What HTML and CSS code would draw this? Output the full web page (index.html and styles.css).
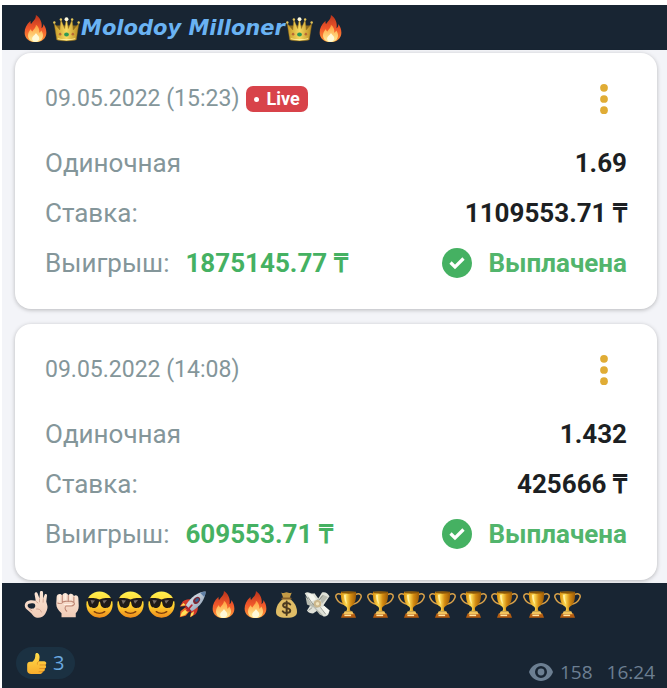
FILE: index.html
```html
<!DOCTYPE html>
<html lang="ru">
<head>
    <meta charset="UTF-8">
    <meta name="viewport" content="width=device-width, initial-scale=1.0">
    <title>Molodoy Milloner</title>
    <link rel="stylesheet" href="styles.css">
</head>
<body>
    <!-- Emoji and icon shapes -->
    <svg class="sprite" aria-hidden="true">
        <defs>
            <linearGradient id="flame-fill" x1="0" y1="0" x2="0" y2="1">
                <stop offset="0" stop-color="#b8331c"/>
                <stop offset="0.5" stop-color="#f0562a"/>
                <stop offset="1" stop-color="#ff9a3a"/>
            </linearGradient>
            <linearGradient id="flame-core" x1="0" y1="0" x2="0" y2="1">
                <stop offset="0" stop-color="#ff9c3a"/>
                <stop offset="1" stop-color="#ffee9a"/>
            </linearGradient>
            <linearGradient id="gold" x1="0" y1="0" x2="1" y2="0">
                <stop offset="0" stop-color="#d98f0c"/>
                <stop offset="0.35" stop-color="#ffdc55"/>
                <stop offset="0.65" stop-color="#d38a10"/>
                <stop offset="1" stop-color="#9a5a08"/>
            </linearGradient>
            <linearGradient id="crown-fill" x1="0" y1="0" x2="1" y2="0">
                <stop offset="0" stop-color="#c79a28"/>
                <stop offset="0.5" stop-color="#f6d960"/>
                <stop offset="1" stop-color="#b98a20"/>
            </linearGradient>
            <linearGradient id="face" x1="0" y1="0" x2="0" y2="1">
                <stop offset="0" stop-color="#fff04f"/>
                <stop offset="0.55" stop-color="#ffd02e"/>
                <stop offset="1" stop-color="#ee8b1c"/>
            </linearGradient>
            <linearGradient id="skin" x1="0" y1="0" x2="0" y2="1">
                <stop offset="0" stop-color="#fbe6d6"/>
                <stop offset="1" stop-color="#f0cbb6"/>
            </linearGradient>
            <linearGradient id="thumb-fill" x1="0" y1="0" x2="0" y2="1">
                <stop offset="0" stop-color="#ffdc4a"/>
                <stop offset="1" stop-color="#f8ad2c"/>
            </linearGradient>
            <linearGradient id="rocket-body" x1="0" y1="0" x2="1" y2="1">
                <stop offset="0" stop-color="#f4f6f8"/>
                <stop offset="1" stop-color="#7d93ab"/>
            </linearGradient>
        </defs>

        <symbol id="fire" viewBox="0 0 36 36">
            <path fill="url(#flame-fill)" d="M18.500 0C19 5 15 8 12 12c-.8-1.800-.8-3-.5-4.500C6 12 3.500 18 3.500 23.500 3.500 31 9.500 36 18 36s14.500-5 14.500-12.500c0-4-1.500-8.500-4-11.500.2 2.500-.8 4.500-2.500 5.500C27.500 10 24 3.500 18.500 0z"/>
            <path fill="url(#flame-core)" d="M18.500 13c.5 4-3.500 6-4.500 9-1.500-.8-2-2-2-3.500C9.500 21 8 24 8 27c0 5.500 4 9 10 9s10-3.500 10-9c0-2.500-1-5-2.500-6.500-.5 1.500-1.500 2.500-2.500 3C23.500 19 22 15.500 18.500 13z"/>
            <path fill="#fff9d8" d="M18.500 24c-.5 2.500-5 4-5 7.500 0 2.500 2 4 4.500 4s5-1.500 5-4.500-2.500-4-4.500-7z"/>
        </symbol>

        <symbol id="crown" viewBox="0 0 36 36">
            <path fill="#8a6a20" d="M4 14h28l-3 13H7z"/>
            <path fill="url(#crown-fill)" stroke="#94701c" stroke-width="0.600" d="M5 33 1.500 11l7.500 9L10.500 6l5 12L18 4l2.500 14 5-12L27 20l7.500-9L31 33c-4 2-22 2-26 0z"/>
            <path fill="none" stroke="#ffec96" stroke-width="1.400" d="M6.500 31.500c5 1.800 18 1.800 23 0"/>
            <circle cx="1.800" cy="10" r="1.600" fill="#e5c65a"/>
            <circle cx="10.500" cy="6" r="1.600" fill="#e5c65a"/>
            <circle cx="18" cy="5.500" r="2.600" fill="#fffbe0"/>
            <circle cx="25.500" cy="6" r="1.600" fill="#e5c65a"/>
            <circle cx="34.200" cy="10" r="1.600" fill="#e5c65a"/>
            <ellipse cx="18" cy="26" rx="3.200" ry="2.700" fill="#2f9a55"/>
            <circle cx="9.500" cy="25.500" r="1.700" fill="#b86a35"/>
            <circle cx="26.500" cy="25.500" r="1.700" fill="#b86a35"/>
        </symbol>

        <symbol id="ok-hand" viewBox="0 0 36 36">
            <path fill="url(#skin)" fill-rule="evenodd" d="M17 13 15.500 4.500c-.5-3 3-4 4-1.300L22 10 22.500 2c.2-3 4-3 4.200 0l.3 8 1.500-4.500c.8-2.500 3.800-2 3.500.8L31 14l1.500 5.500c.7 3-.5 7-3 11C27.500 34 23 36.300 18.500 35.500 15.500 35 13 32.500 11 29.500L4.500 24C2 21.500 1.500 17.500 4 15c3-3 8.500-3.300 13-2zM8 17c-2.500.8-2.300 4 0 5.500 2.500 1.500 6 1.500 7.500-.5s1-4.500-1-5.200C12.500 16 10 16.300 8 17z"/>
            <path fill="none" stroke="#c79683" stroke-width="1" stroke-linecap="round" d="M22 10.500v4M27 10.500l-.2 4.500M17 13.500l3 2.500M18 24c3-.5 6 1 6.500 4M8 23.500l4 3"/>
        </symbol>

        <symbol id="fist" viewBox="0 0 36 36">
            <path fill="url(#skin)" d="M3.500 8c0-4.500 6-5.500 7.500-2 1-4.500 7-4.500 8 0 1.500-3.500 7-3 7.500 1 2-2.500 6-1 6 2.500L33 20c0 5-2 7.500-4 9.500V35H10v-5.500C5.500 26 3 22 3 17z"/>
            <path fill="none" stroke="#bd8573" stroke-width="1.400" stroke-linecap="round" d="M11 6v9M19 6v8M26.500 8v7M5 16c3 1.500 6 .5 7-1.500 4-1 11-1.500 14 .5 3 2 0 5-3 5h-7c-2 2-1.500 5 1 7"/>
            <path fill="none" stroke="#fff1e6" stroke-width="1.600" stroke-linecap="round" d="M7 6v6M15 5v6M22.500 6v5M14 18h9"/>
        </symbol>

        <symbol id="cool" viewBox="0 0 36 36">
            <circle cx="18" cy="18" r="17.500" fill="url(#face)"/>
            <path fill="#1f1a18" d="M1 10c5-1 11-.8 15 .8 1.500.5 2.500.5 4 0C24 9.200 30 9 35 10v3c-1.200.5-1.500 1-1.800 3-.7 5-3 6.500-7 6.500-4.500 0-6.500-2-7.200-7-.3-2-1.700-2-2 0-.7 5-2.700 7-7.200 7-4 0-6.300-1.500-7-6.500C2.500 14 2.200 13.500 1 13z"/>
            <path fill="#746b66" d="m6 12 6 .5-4 5zM22 12.500l6-.5-4 5z"/>
            <path fill="none" stroke="#7c3c0c" stroke-width="1.800" stroke-linecap="round" d="M11 27.500c4 3 10 3 14 0"/>
        </symbol>

        <symbol id="rocket" viewBox="0 0 36 36">
            <path fill="#d23a2a" d="M15 11c-4-.5-8 1-10 3l-4 7 8-1zM25 21c.5 4-1 8-3 10l-7 4 1-8z"/>
            <path fill="#f06a26" d="M8 22 2 27l-1 8 8-2 5-6z"/>
            <path fill="#ffe056" d="M8 25 3.500 29 2 34l6-2 4-4zM16 30l4-3-1 5-4 3zM2 20l4-4 3 3z"/>
            <path fill="url(#rocket-body)" d="M35.500.5C26 1 16 7 9 19l8 8C29 20 35 10 35.500.5z"/>
            <path fill="#5f7fa6" d="M35.500.5c-2.500.1-5 .7-7.500 1.800l5.700 5.700c1.100-2.500 1.700-5 1.800-7.500z"/>
            <path fill="#b4262f" d="m9 19 8 8-3 1-6-6z"/>
            <ellipse cx="23.500" cy="12.500" rx="5.200" ry="3.800" transform="rotate(-45 23.500 12.500)" fill="#7b2733"/>
            <ellipse cx="24" cy="12" rx="3" ry="2" transform="rotate(-45 24 12)" fill="#2f5f92"/>
            <path stroke="#b82732" stroke-width="2.500" stroke-linecap="round" d="m17 19-6 7"/>
        </symbol>

        <symbol id="money-bag" viewBox="0 0 36 36">
            <path fill="#c39a45" d="M11 2c3 1.500 4 0 7-.5 3 .5 4 2 7 .5l-3 8h-8z"/>
            <path fill="#e0bd66" d="M14 10h8c6 4 10 11 10 17.500 0 5.500-4 8-14 8s-14-2.500-14-8C4 21 8 14 14 10z"/>
            <path stroke="#87602a" stroke-width="2.400" stroke-linecap="round" d="M12.500 10h11"/>
            <path fill="none" stroke="#4b3a20" stroke-width="2.600" stroke-linecap="round" d="M23 18c-2-3-9.500-2.500-9.500 1.300 0 4.200 9.500 2.200 9.500 6.700 0 4-8 4.500-10 1M18.200 14v18"/>
        </symbol>

        <symbol id="flying-money" viewBox="0 0 36 36">
            <path fill="#dfe1d8" d="M1 3c5-4 8 2 13 0l5 7 5-8c5-1 7 1 10 5l-8 12 8 7c-1 6-3 8-8 8l-8-8-6 4c-4 0-6-1-8-4l5-8z"/>
            <path fill="#b8bbb0" d="m2 7 9 11 8-8 3 10-6 3 10 10c-3 0-5-1-7-4l-6-7-9-4zM25 5l7 3-8 9-3-7z"/>
            <path fill="#f5f6ef" d="m4 3 8 2 4 6-6 3zM27 20l7 6-4 6-8-9z"/>
            <circle cx="18" cy="17" r="5" fill="#cbb78c"/>
            <circle cx="18" cy="17" r="2.300" fill="#f1e4bd"/>
            <path fill="none" stroke="#75796f" stroke-width="0.900" d="m5 8 8 11M25 6l-5 6M22 22l7 9M11 22l-5 4"/>
        </symbol>

        <symbol id="trophy" viewBox="0 0 36 36">
            <path fill="none" stroke="#d8a14a" stroke-width="2" d="M9 5C3 2 0 5 1.500 9c1.500 4 6 8 12 9M27 5c6-3 9 0 7.500 4-1.500 4-6 8-12 9"/>
            <path fill="url(#gold)" d="M8 1h20c.5 10-1 17-7 20-1.500 1.500-1.500 4 0 6h-6c1.500-2 1.500-4.500 0-6C9 18 7.500 11 8 1z"/>
            <ellipse cx="18" cy="2" rx="10" ry="1.600" fill="#8b5708"/>
            <path fill="#fff0a0" d="M12 5h2.500c0 5 .5 9 2 13C13 15 12 10 12 5z"/>
            <path fill="#b45c10" d="M10 30h16l2 5.500H8z"/>
            <path fill="#f3c45c" d="M13 27h10l2 4H11z"/>
            <path fill="#ffe6a3" d="M12.500 31.500h9v2h-9z"/>
        </symbol>

        <symbol id="thumb" viewBox="0 0 36 36">
            <path fill="url(#thumb-fill)" d="M2 20c0-3 2-5 5-5h4c4-3 5-7 5-12 0-4 5-3.500 6.500 0 1.500 4 .5 8-.5 11h9c4 0 5 5 2 6.500 2.500 2 1.500 5.500-1 6 1 3-.5 5-3 5.200C28 35 26 36 22 36H9c-4 0-7-2-7-6z"/>
            <path fill="none" stroke="#db8420" stroke-width="1.300" stroke-linecap="round" d="M24 20.500h9M23.500 26.500H32M22.500 32H29M22 14c-2 1-3 3-2.500 5"/>
        </symbol>

        <symbol id="check" viewBox="0 0 30 30">
            <circle cx="15" cy="15" r="15" fill="#45b162"/>
            <path fill="none" stroke="#fff" stroke-width="3.200" d="m8.500 14.500 4.500 4.500 8.500-8.500"/>
        </symbol>

        <symbol id="dots" viewBox="0 0 8 31">
            <circle cx="4" cy="4" r="4"/>
            <circle cx="4" cy="15.500" r="4"/>
            <circle cx="4" cy="27" r="4"/>
        </symbol>

        <symbol id="eye" viewBox="0 0 24 18">
            <path fill-rule="evenodd" d="M12 0C6.500 0 2 3.500 0 9c2 5.500 6.500 9 12 9s10-3.500 12-9C22 3.500 17.500 0 12 0zm0 3a6 6 0 1 1 0 12 6 6 0 0 1 0-12z"/>
            <circle cx="12" cy="9" r="3.400"/>
        </symbol>
    </svg>

    <main class="message">
        <header class="message-header">
            <svg class="emoji"><use href="#fire"/></svg>
            <svg class="emoji"><use href="#crown"/></svg>
            <h1>Molodoy Milloner</h1>
            <svg class="emoji"><use href="#crown"/></svg>
            <svg class="emoji"><use href="#fire"/></svg>
        </header>

        <section class="bets">
            <article class="card">
                <div class="card-top">
                    <time datetime="2022-05-09T15:23">09.05.2022 (15:23)</time>
                    <span class="live">Live</span>
                    <button class="menu-button" type="button" aria-label="Меню"><svg><use href="#dots"/></svg></button>
                </div>
                <div class="row">
                    <span>Одиночная</span>
                    <span class="value">1.69</span>
                </div>
                <div class="row">
                    <span>Ставка:</span>
                    <span class="value">1109553.71 ₸</span>
                </div>
                <div class="row">
                    <span>Выигрыш:</span>
                    <span class="win">1875145.77 ₸</span>
                    <span class="status"><svg><use href="#check"/></svg>Выплачена</span>
                </div>
            </article>

            <article class="card">
                <div class="card-top">
                    <time datetime="2022-05-09T14:08">09.05.2022 (14:08)</time>
                    <button class="menu-button" type="button" aria-label="Меню"><svg><use href="#dots"/></svg></button>
                </div>
                <div class="row">
                    <span>Одиночная</span>
                    <span class="value">1.432</span>
                </div>
                <div class="row">
                    <span>Ставка:</span>
                    <span class="value">425666 ₸</span>
                </div>
                <div class="row">
                    <span>Выигрыш:</span>
                    <span class="win">609553.71 ₸</span>
                    <span class="status"><svg><use href="#check"/></svg>Выплачена</span>
                </div>
            </article>
        </section>

        <footer class="message-footer">
            <div class="emoji-line">
                <svg class="emoji"><use href="#ok-hand"/></svg>
                <svg class="emoji"><use href="#fist"/></svg>
                <svg class="emoji"><use href="#cool"/></svg>
                <svg class="emoji"><use href="#cool"/></svg>
                <svg class="emoji"><use href="#cool"/></svg>
                <svg class="emoji"><use href="#rocket"/></svg>
                <svg class="emoji"><use href="#fire"/></svg>
                <svg class="emoji"><use href="#fire"/></svg>
                <svg class="emoji"><use href="#money-bag"/></svg>
                <svg class="emoji"><use href="#flying-money"/></svg>
                <svg class="emoji"><use href="#trophy"/></svg>
                <svg class="emoji"><use href="#trophy"/></svg>
                <svg class="emoji"><use href="#trophy"/></svg>
                <svg class="emoji"><use href="#trophy"/></svg>
                <svg class="emoji"><use href="#trophy"/></svg>
                <svg class="emoji"><use href="#trophy"/></svg>
                <svg class="emoji"><use href="#trophy"/></svg>
                <svg class="emoji"><use href="#trophy"/></svg>
            </div>
            <div class="message-info">
                <button class="reaction" type="button"><svg><use href="#thumb"/></svg>3</button>
                <div class="meta">
                    <svg><use href="#eye"/></svg>
                    <span>158</span>
                    <time datetime="16:24">16:24</time>
                </div>
            </div>
        </footer>
    </main>
</body>
</html>
```
FILE: styles.css
```css
* {
    box-sizing: border-box;
}

body {
    margin: 0;
    padding: 5px 0 0 2px;
    background-color: #fff;
    font-family: Roboto, sans-serif;
}

svg {
    display: block;
    flex-shrink: 0;
}

button {
    border: none;
    font: inherit;
    cursor: pointer;
}

.sprite {
    position: absolute;
    width: 0;
    height: 0;
}

.emoji {
    width: 27px;
    height: 27px;
}

/* Channel name */
.message-header {
    display: flex;
    align-items: center;
    gap: 4px;
    padding: 10px 20px 8px;
    background-color: #182533;
}

h1 {
    margin: 0 -3px;
    font-family: "DejaVu Sans", sans-serif;
    font-size: 21px;
    line-height: 27px;
    font-weight: bold;
    font-style: italic;
    color: #6ab3f3;
}

/* Bet cards */
.bets {
    display: flex;
    flex-direction: column;
    gap: 15px;
    padding: 3px 10px 3px 13px;
    background-color: #f3f4f8;
}

.card {
    display: flex;
    flex-direction: column;
    gap: 20px;
    padding: 31px 30px;
    border-radius: 16px;
    background-color: #fff;
    box-shadow: 0 1px 4px rgba(0, 0, 0, 0.25);
    font-size: 26px;
    line-height: 30px;
    color: #84969a;
}

.card-top {
    display: flex;
    align-items: center;
    margin-bottom: 14px;
    font-size: 23px;
}

.live {
    display: flex;
    align-items: center;
    gap: 7px;
    margin-left: 7px;
    padding: 0 8px;
    border-radius: 7px;
    background-color: #d8434a;
    font-size: 18px;
    line-height: 26px;
    font-weight: bold;
    color: #fff;
}

.live::before {
    content: "";
    width: 5px;
    height: 5px;
    border-radius: 50%;
    background-color: #fff;
}

.menu-button {
    margin-left: auto;
    padding: 0 19px;
    background: none;
}

.menu-button svg {
    width: 8px;
    height: 30px;
    fill: #e0ac35;
}

.row {
    display: flex;
    align-items: center;
}

.value {
    margin-left: auto;
    font-weight: bold;
    color: #1c1f23;
}

.win {
    margin-left: 16px;
    font-weight: bold;
    color: #45b162;
}

.status {
    display: flex;
    align-items: center;
    gap: 16px;
    margin-left: auto;
    font-weight: bold;
    color: #52b56c;
}

.status svg {
    width: 30px;
    height: 30px;
}

/* Text under the photo */
.message-footer {
    padding: 8px 12px 3px 14px;
    background-color: #182533;
    font-family: "Open Sans", sans-serif;
}

.emoji-line {
    display: grid;
    grid-template-columns: repeat(18, 1fr);
    justify-items: center;
    max-width: 562px;
    margin: 0 5px 29px;
}

.message-info {
    display: flex;
    justify-content: space-between;
    align-items: flex-start;
}

.reaction {
    display: flex;
    align-items: center;
    gap: 6px;
    padding: 0 11px 0 10px;
    border-radius: 16px;
    background-color: #1b3142;
    font-size: 20px;
    line-height: 32px;
    color: #6aa9e0;
}

.reaction svg {
    width: 21px;
    height: 21px;
}

.meta {
    display: flex;
    align-items: center;
    gap: 7px;
    padding-top: 12px;
    font-size: 19px;
    line-height: 26px;
    color: #6c7f92;
}

.meta svg {
    width: 24px;
    height: 18px;
    fill: #6c7f92;
}

.meta time {
    margin-left: 7px;
}
```
